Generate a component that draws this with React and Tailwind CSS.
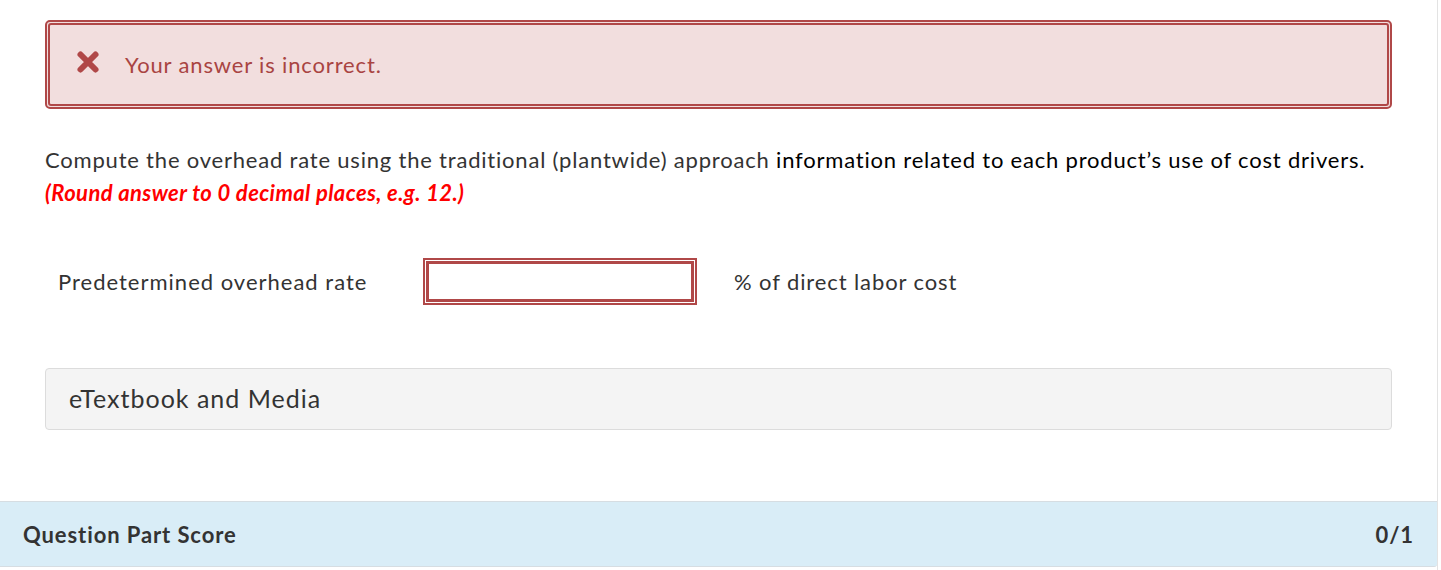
export default function App() {
  return (
    <div className="w-[1441px] h-[570px] bg-white" style={{ fontFamily: 'Lato, "Open Sans", sans-serif' }}>
      <div className="w-[1438px] h-[570px] border-r border-[#e3e3e3] flex flex-col">
        <div className="pt-[20px] pl-[45px] pr-[45px]">
          <div className="h-[89px] rounded-[5px] border-2 border-[#b04848] p-[1px] bg-[#f2dede]">
            <div className="h-full rounded-[3px] border-2 border-[#b04848] flex items-center pl-[26px]">
              <svg width="24" height="24" viewBox="0 0 24 24" className="mt-[-6px]">
                <path d="M4.5 4.5 L19.5 19.5 M19.5 4.5 L4.5 19.5" stroke="#b04848" strokeWidth="6" strokeLinecap="round" />
              </svg>
              <span className="ml-[25px] text-[22px] tracking-[0.85px] text-[#a94442] mt-[-1px]">Your answer is incorrect.</span>
            </div>
          </div>
        </div>
        <div className="pl-[45px] pt-[34px] text-[22px] leading-[33px] tracking-[0.8px]">
          <div>
            <span className="text-[#333]">Compute the overhead rate using the traditional (plantwide) approach </span>
            <span className="text-black">information related to each product’s use of cost drivers.</span>
          </div>
          <div className="text-[#ff0000] font-bold italic tracking-[0.4px]">(Round answer to 0 decimal places, e.g. 12.)</div>
        </div>
        <div className="flex items-center pl-[58px] mt-[49px] h-[47px]">
          <span className="w-[365px] text-[22px] tracking-[1px] text-[#333]">Predetermined overhead rate</span>
          <div className="w-[274px] h-[47px] border-2 border-[#b04848] p-[1px] bg-white">
            <div className="h-full border-[3px] border-[#b04848]"></div>
          </div>
          <span className="ml-[37px] text-[22px] tracking-[0.9px] text-[#333]">% of direct labor cost</span>
        </div>
        <div className="px-[45px] mt-[63px]">
          <div className="h-[62px] rounded-[4px] border border-[#dcdcdc] bg-[#f4f4f4] flex items-center pl-[23px]">
            <span className="text-[25px] tracking-[1px] text-[#333]">eTextbook and Media</span>
          </div>
        </div>
        <div className="mt-[71px] h-[66px] bg-[#d9edf7] border-t border-b border-[#d6dde2] rounded-br-[3px] flex items-center justify-between pl-[23px] pr-[23px]">
          <span className="text-[22px] font-bold tracking-[0.9px] text-[#333]">Question Part Score</span>
          <span className="text-[22px] font-bold tracking-[0.9px] text-[#333]">0/1</span>
        </div>
      </div>
    </div>
  );
}
